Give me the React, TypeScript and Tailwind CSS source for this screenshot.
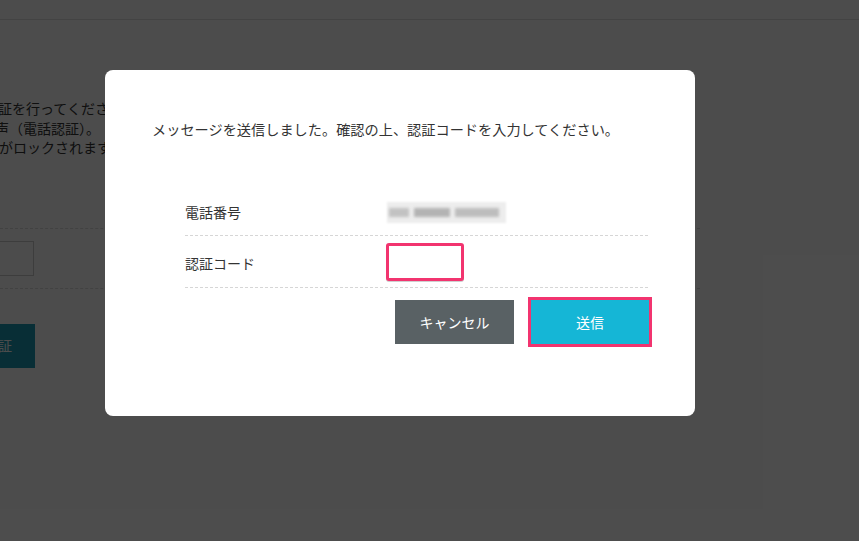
export default function App() {
  return (
    <div className="relative h-[541px] w-[859px] overflow-hidden bg-white font-['Noto_Sans_CJK_JP','Noto_Sans',sans-serif] text-[#333]">
      {/* page behind the dialog */}
      <div className="h-[20px] border-b border-[#e2e2e2]" />
      <div className="mt-[79px] text-[14px] leading-[19.5px]">
        <p className="ml-[-2px]">証を行ってください。</p>
        <p className="ml-[-5px]">声（電話認証）。</p>
        <p className="ml-[-1px]">がロックされます。</p>
      </div>
      <div className="mt-[70px] w-[700px] border-t border-dashed border-[#dcdcdc]" />
      <div className="flex h-[59px] items-center">
        <div className="ml-[-100px] h-[35px] w-[134px] border border-[#ccc] bg-white" />
      </div>
      <div className="w-[700px] border-t border-dashed border-[#dcdcdc]" />
      <div className="mt-[35px] ml-[-90px] flex h-[44px] w-[125px] items-center justify-end bg-[#1b9cb5] pr-[23px] text-[14px] text-white">
        認証
      </div>

      {/* overlay */}
      <div className="absolute inset-0 bg-black/70">
        <div className="ml-[105px] mt-[70px] h-[346px] w-[590px] rounded-lg bg-white px-[47px] pt-[49px]">
          <p className="text-[14.2px] leading-[20px] text-[#333]">
            メッセージを送信しました。確認の上、認証コードを入力してください。
          </p>

          <div className="ml-[33px] mt-[50px] w-[463px] text-[14px] text-[#333]">
            <div className="flex h-[47px] items-center border-b border-dashed border-[#d6d6d6]">
              <div className="w-[202px]">電話番号</div>
              <div className="relative h-[21px] w-[119px]">
                <div className="absolute inset-0 bg-[#ededed] blur-[1px]" />
                <div className="absolute inset-x-[2px] top-[6px] flex h-[9px] gap-[5px] blur-[1.5px]">
                  <div className="w-[20px] bg-[#c2c2c2]" />
                  <div className="w-[36px] bg-[#b3b3b3]" />
                  <div className="w-[44px] bg-[#bdbdbd]" />
                </div>
              </div>
            </div>
            <div className="flex h-[52px] items-center border-b border-dashed border-[#d6d6d6]">
              <div className="w-[201px] pt-[3px]">認証コード</div>
              <input
                type="text"
                className="h-[38px] w-[78px] rounded-[3px] border-[3px] border-[#f2346f] bg-white shadow-[0_1px_0_#cfcfcf] outline-none"
              />
            </div>
          </div>

          <div className="ml-[33px] mt-[12px] flex w-[464px] justify-end gap-[17px] text-[14px] text-white">
            <button className="h-[44px] w-[119px] bg-[#596164]">キャンセル</button>
            <button className="h-[44px] w-[118px] bg-[#15b6d6] outline-[3px] outline-offset-0 outline-[#f2346f] outline">
              送信
            </button>
          </div>
        </div>
      </div>
    </div>
  );
}
